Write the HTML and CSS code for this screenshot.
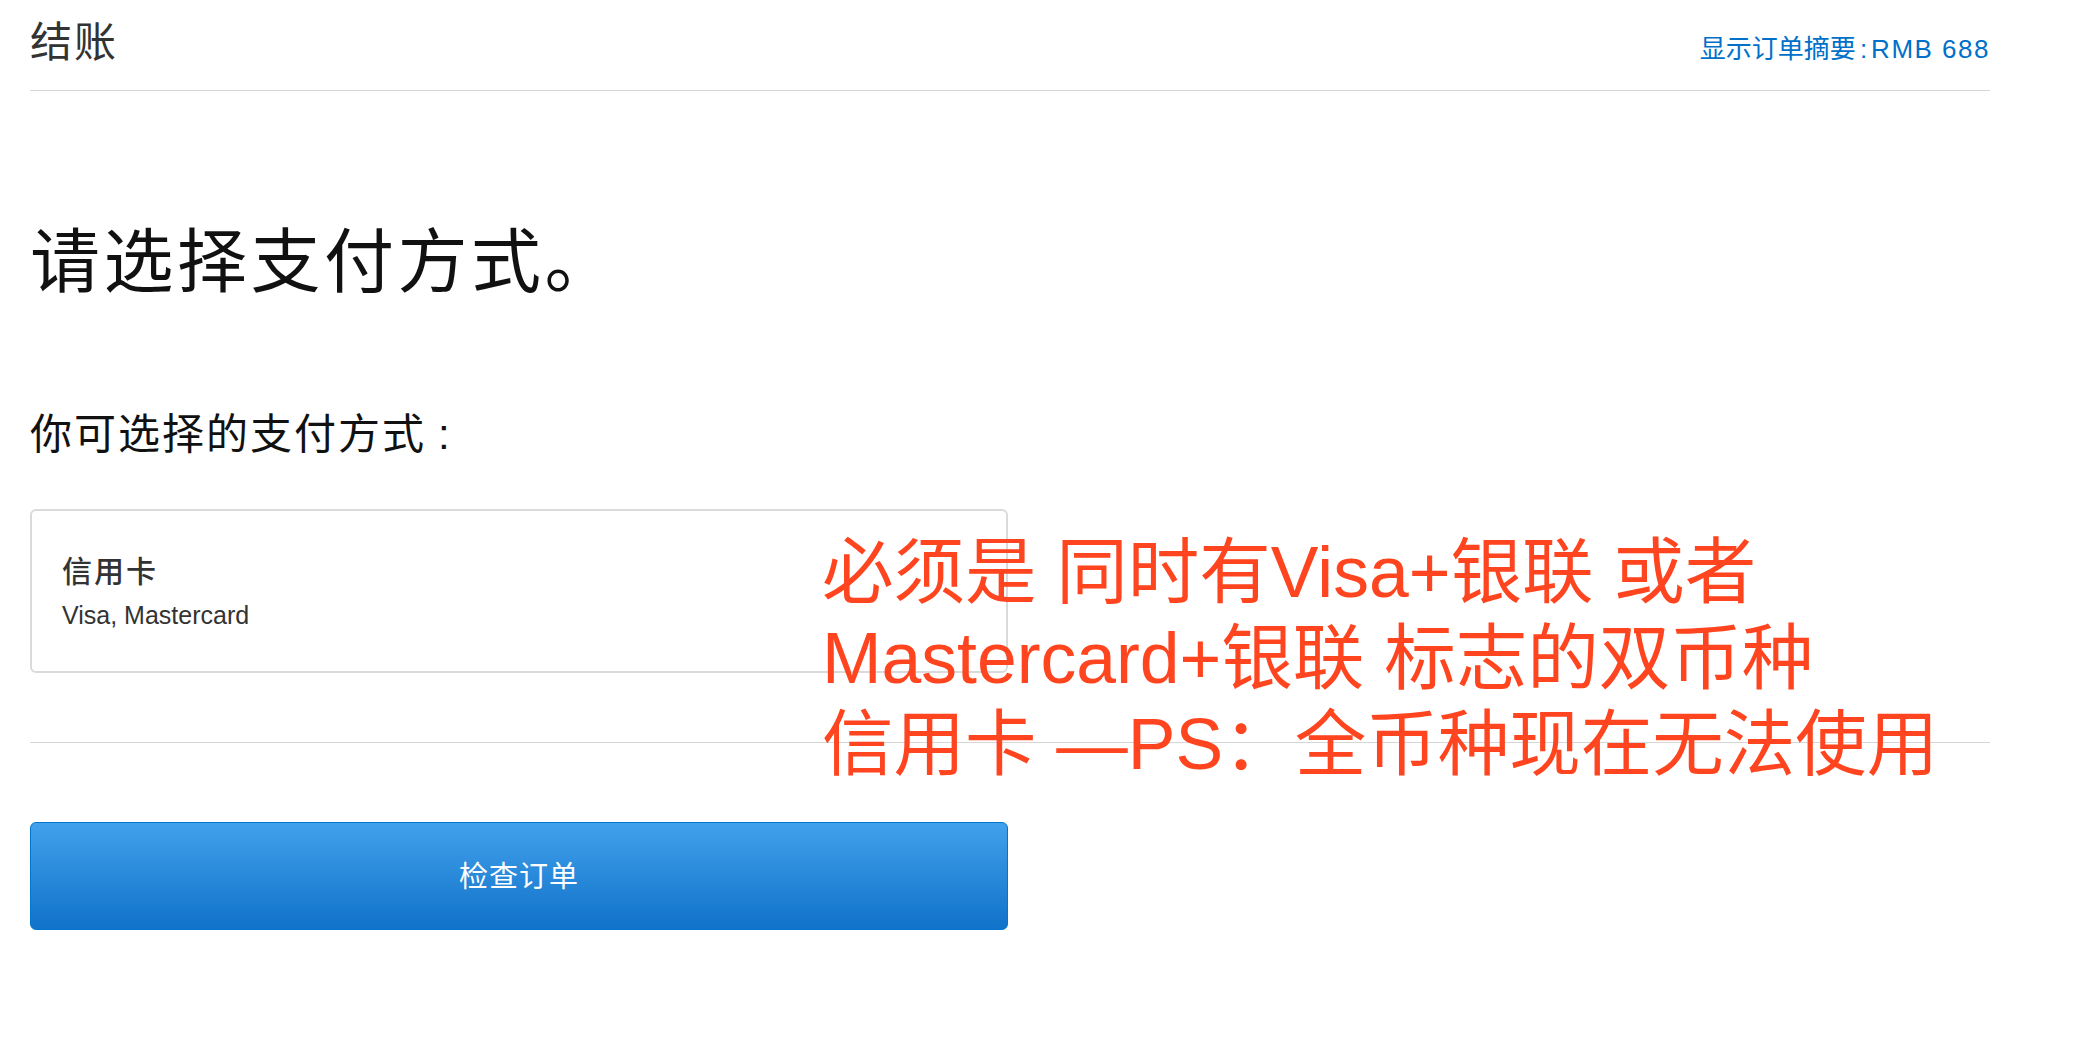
FILE: index.html
```html
<!DOCTYPE html>
<html lang="zh-CN">
<head>
    <meta charset="UTF-8">
    <meta name="viewport" content="width=device-width, initial-scale=1.0">
    <title>结账</title>
    <link rel="stylesheet" href="styles.css">
</head>
<body>
    <div class="page">
        <div class="header">
            <div class="header-title">结账</div>
            <a class="summary-link" href="#">显示订单摘要<span class="colon">:</span><span class="amount">RMB 688</span></a>
        </div>

        <h1 class="page-title">请选择支付方式。</h1>
        <h2 class="section-title">你可选择的支付方式<span class="colon">:</span></h2>

        <div class="pay-option">
            <div class="pay-name">信用卡</div>
            <div class="pay-desc">Visa, Mastercard</div>
        </div>

        <div class="divider"></div>

        <button class="review-btn" type="button">检查订单</button>

        <div class="note">必须是 同时有Visa+银联 或者<br>Mastercard+银联 标志的双币种<br>信用卡 —PS：全币种现在无法使用</div>
    </div>
</body>
</html>
```

FILE: styles.css
```css
body {
    margin: 0;
    background: #fff;
    font-family: "Liberation Sans", "Noto Sans CJK SC", sans-serif;
    color: #333;
}
.page {
    position: relative;
    width: 1960px;
    margin-left: 30px;
}
.header {
    display: flex;
    justify-content: space-between;
    align-items: flex-start;
    height: 91px;
    box-sizing: border-box;
    border-bottom: 1px solid #d6d6d6;
}
.header-title {
    margin-top: 18px;
    font-size: 42px;
    line-height: 50px;
    letter-spacing: 2px;
    color: #333;
}
.summary-link {
    margin-top: 34px;
    font-size: 26px;
    line-height: 30px;
    color: #0070c9;
    text-decoration: none;
}
.summary-link .colon {
    margin: 0 4px;
}
.summary-link .amount {
    letter-spacing: 1.5px;
}
.page-title {
    margin: 130px 0 0;
    font-size: 70px;
    line-height: 84px;
    font-weight: 400;
    letter-spacing: 3.5px;
    color: #111;
}
.section-title {
    margin: 105px 0 0;
    font-size: 42px;
    line-height: 50px;
    font-weight: 400;
    letter-spacing: 2px;
    color: #111;
}
.section-title .colon {
    margin-left: 12px;
}
.pay-option {
    width: 978px;
    box-sizing: border-box;
    margin-top: 49px;
    padding: 43px 30px 41px;
    border: 2px solid #dadada;
    border-radius: 6px;
}
.pay-name {
    font-size: 30px;
    line-height: 36px;
    font-weight: 500;
    letter-spacing: 2px;
    color: #333;
}
.pay-desc {
    margin-top: 10px;
    font-size: 25px;
    line-height: 30px;
    color: #333;
}
.divider {
    margin-top: 69px;
    border-top: 1px solid #d6d6d6;
}
.review-btn {
    display: block;
    width: 978px;
    height: 108px;
    margin-top: 79px;
    padding: 0 0 4px;
    border: 1px solid #0077cc;
    border-radius: 6px;
    background: linear-gradient(#42a1ec, #1072c9);
    color: #fff;
    font-family: inherit;
    font-size: 29px;
    letter-spacing: 1px;
    cursor: pointer;
}
.note {
    position: absolute;
    left: 792px;
    top: 529px;
    font-size: 71.5px;
    line-height: 86px;
    color: #ff451f;
    white-space: nowrap;
}
```
